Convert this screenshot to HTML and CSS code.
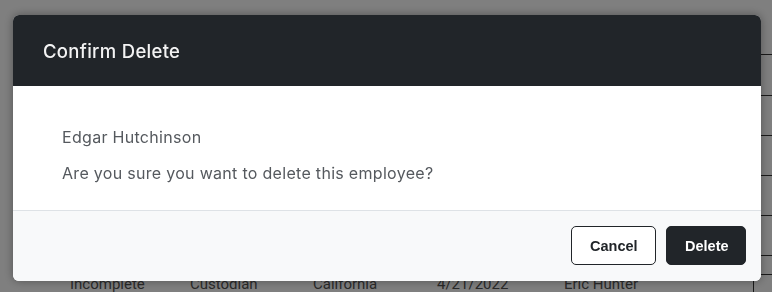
FILE: index.html
```html
<!DOCTYPE html>
<html lang="en">
<head>
<meta charset="utf-8">
<title>Confirm Delete</title>
<link rel="stylesheet" href="styles.css">
</head>
<body>
  <div class="page">
    <div class="row row-head"></div>
    <div class="row row-first"></div>
    <div class="row"></div>
    <div class="row"></div>
    <div class="row"></div>
    <div class="row"></div>
    <div class="row row-data">
      <span>Incomplete</span>
      <span>Custodian</span>
      <span>California</span>
      <span>4/21/2022</span>
      <span>Eric Hunter</span>
      <span class="row-action"></span>
    </div>
  </div>

  <div class="overlay">
    <div class="modal">
      <div class="modal-header">
        <h2 class="modal-title">Confirm Delete</h2>
      </div>
      <div class="modal-body">
        <p class="modal-text">Edgar Hutchinson</p>
        <p class="modal-text">Are you sure you want to delete this employee?</p>
      </div>
      <div class="modal-footer">
        <button class="btn btn-outline">Cancel</button>
        <button class="btn btn-dark">Delete</button>
      </div>
    </div>
  </div>
</body>
</html>
```

FILE: styles.css
```css
* { box-sizing: border-box; }

html, body {
  margin: 0;
  padding: 0;
  background: #ffffff;
  width: 772px;
  height: 292px;
  overflow: hidden;
}

body {
  font-family: Inter, "Noto Sans", sans-serif;
}

/* background page (table) */
.page {
  width: 772px;
  padding-left: 40px;
}

.row {
  height: 40px;
  border-bottom: 1px solid #333;
  display: grid;
  grid-template-columns: 120px 123px 124px 127px 189px 19px;
  padding-left: 30px;
  align-items: center;
  font-family: Roboto, "Liberation Sans", sans-serif;
  font-size: 15px;
  color: #555;
  white-space: nowrap;
}

.row-head { height: 55px; }
.row-first { height: 41px; }

.row-data {
  border-bottom: none;
  padding-top: 8px;
}

.row-action {
  height: 30px;
  border-left: 1px solid #333;
  border-top: 1px solid #333;
  border-radius: 4px 0 0 0;
  margin-top: 10px;
}

/* overlay + modal */
.overlay {
  position: fixed;
  inset: 0;
  background: rgba(0, 0, 0, 0.5);
  padding: 15px 11px 0 13px;
}

.modal {
  width: 748px;
  border-radius: 6px;
  overflow: hidden;
  background: #fff;
  box-shadow: 0 0 10px rgba(0, 0, 0, 0.35);
}

.modal-header {
  height: 71px;
  background: #212529;
  display: flex;
  align-items: center;
  padding-left: 30px;
}

.modal-title {
  margin: 0;
  font-size: 18.5px;
  font-weight: 500;
  color: #f3f3f3;
  letter-spacing: 0.3px;
}

.modal-body {
  height: 124px;
  padding: 39px 49px 0;
  display: flex;
  flex-direction: column;
  gap: 12px;
}

.modal-text {
  margin: 0;
  font-size: 16px;
  line-height: 24px;
  letter-spacing: 0.3px;
  color: #55595e;
}

.modal-footer {
  height: 71px;
  border-top: 1px solid #dee2e6;
  background: #f8f9fa;
  display: flex;
  justify-content: flex-end;
  align-items: flex-start;
  gap: 10px;
  padding: 15px 15px 0;
}

.btn {
  height: 39px;
  padding: 1px 18px 0;
  border-radius: 5px;
  font-family: "Liberation Sans", Arial, sans-serif;
  font-weight: 700;
  font-size: 14.5px;
  cursor: pointer;
}

.btn-outline {
  width: 85px;
  background: #fff;
  color: #212529;
  border: 1px solid #212529;
}

.btn-dark {
  width: 80px;
  background: #212529;
  color: #fff;
  border: 1px solid #212529;
}
```
